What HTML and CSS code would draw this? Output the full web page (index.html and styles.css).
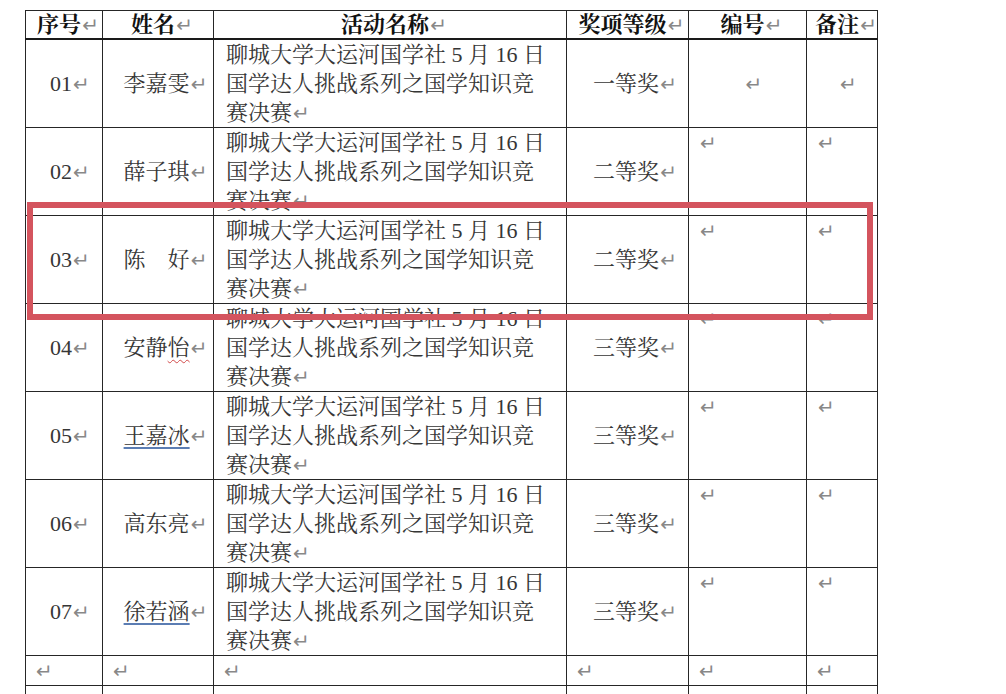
FILE: index.html
```html
<!DOCTYPE html>
<html lang="zh-CN">
<head>
<meta charset="utf-8">
<title>获奖名单</title>
<link rel="stylesheet" href="styles.css">
</head>
<body>
<div class="sheet">
  <table class="awards">
    <colgroup>
      <col class="c-no"><col class="c-name"><col class="c-act"><col class="c-level"><col class="c-code"><col class="c-note">
    </colgroup>
    <thead>
      <tr>
        <th>序号<span class="pm">↵</span></th>
        <th>姓名<span class="pm">↵</span></th>
        <th>活动名称<span class="pm">↵</span></th>
        <th>奖项等级<span class="pm">↵</span></th>
        <th>编号<span class="pm">↵</span></th>
        <th>备注<span class="pm">↵</span></th>
      </tr>
    </thead>
    <tbody>
      <tr class="data">
        <td class="mid">01<span class="pm">↵</span></td>
        <td class="mid">李嘉雯<span class="pm">↵</span></td>
        <td class="act">聊城大学大运河国学社 5 月 16 日国学达人挑战系列之国学知识竞赛决赛<span class="pm">↵</span></td>
        <td class="mid">一等奖<span class="pm">↵</span></td>
        <td class="mid"><span class="pm">↵</span></td>
        <td class="mid"><span class="pm">↵</span></td>
      </tr>
      <tr class="data">
        <td class="mid">02<span class="pm">↵</span></td>
        <td class="mid">薛子琪<span class="pm">↵</span></td>
        <td class="act">聊城大学大运河国学社 5 月 16 日国学达人挑战系列之国学知识竞赛决赛<span class="pm">↵</span></td>
        <td class="mid">二等奖<span class="pm">↵</span></td>
        <td class="top"><span class="pm">↵</span></td>
        <td class="top"><span class="pm">↵</span></td>
      </tr>
      <tr class="data">
        <td class="mid">03<span class="pm">↵</span></td>
        <td class="mid">陈　好<span class="pm">↵</span></td>
        <td class="act">聊城大学大运河国学社 5 月 16 日国学达人挑战系列之国学知识竞赛决赛<span class="pm">↵</span></td>
        <td class="mid">二等奖<span class="pm">↵</span></td>
        <td class="top"><span class="pm">↵</span></td>
        <td class="top"><span class="pm">↵</span></td>
      </tr>
      <tr class="data">
        <td class="mid">04<span class="pm">↵</span></td>
        <td class="mid">安静<span class="wavy">怡</span><span class="pm">↵</span></td>
        <td class="act">聊城大学大运河国学社 5 月 16 日国学达人挑战系列之国学知识竞赛决赛<span class="pm">↵</span></td>
        <td class="mid">三等奖<span class="pm">↵</span></td>
        <td class="top"><span class="pm">↵</span></td>
        <td class="top"><span class="pm">↵</span></td>
      </tr>
      <tr class="data">
        <td class="mid">05<span class="pm">↵</span></td>
        <td class="mid"><span class="ul">王嘉冰</span><span class="pm">↵</span></td>
        <td class="act">聊城大学大运河国学社 5 月 16 日国学达人挑战系列之国学知识竞赛决赛<span class="pm">↵</span></td>
        <td class="mid">三等奖<span class="pm">↵</span></td>
        <td class="top"><span class="pm">↵</span></td>
        <td class="top"><span class="pm">↵</span></td>
      </tr>
      <tr class="data">
        <td class="mid">06<span class="pm">↵</span></td>
        <td class="mid">高东亮<span class="pm">↵</span></td>
        <td class="act">聊城大学大运河国学社 5 月 16 日国学达人挑战系列之国学知识竞赛决赛<span class="pm">↵</span></td>
        <td class="mid">三等奖<span class="pm">↵</span></td>
        <td class="top"><span class="pm">↵</span></td>
        <td class="top"><span class="pm">↵</span></td>
      </tr>
      <tr class="data">
        <td class="mid">07<span class="pm">↵</span></td>
        <td class="mid"><span class="ul">徐若涵</span><span class="pm">↵</span></td>
        <td class="act">聊城大学大运河国学社 5 月 16 日国学达人挑战系列之国学知识竞赛决赛<span class="pm">↵</span></td>
        <td class="mid">三等奖<span class="pm">↵</span></td>
        <td class="top"><span class="pm">↵</span></td>
        <td class="top"><span class="pm">↵</span></td>
      </tr>
      <tr class="empty">
        <td><span class="pm">↵</span></td>
        <td><span class="pm">↵</span></td>
        <td><span class="pm">↵</span></td>
        <td><span class="pm">↵</span></td>
        <td><span class="pm">↵</span></td>
        <td><span class="pm">↵</span></td>
      </tr>
      <tr class="empty">
        <td><span class="pm">↵</span></td>
        <td><span class="pm">↵</span></td>
        <td><span class="pm">↵</span></td>
        <td><span class="pm">↵</span></td>
        <td><span class="pm">↵</span></td>
        <td><span class="pm">↵</span></td>
      </tr>
    </tbody>
  </table>
  <div class="highlight"></div>
</div>
</body>
</html>
```

FILE: styles.css
```css
html, body {
  margin: 0;
  padding: 0;
  background: #ffffff;
  overflow: hidden;
}

body {
  font-family: "Liberation Serif", "Noto Serif CJK SC", "Noto Sans CJK SC", serif;
  color: #363636;
}

.sheet {
  position: relative;
  padding: 10px 0 0 25px;
  width: 981px;
  height: 684px;
}

.awards {
  border-collapse: collapse;
  table-layout: fixed;
  width: 852px;
  font-size: 22px;
}

.c-no { width: 77px; }
.c-name { width: 111px; }
.c-act { width: 353px; }
.c-level { width: 122px; }
.c-code { width: 118px; }
.c-note { width: 71px; }

.awards th,
.awards td {
  border: 1px solid #262626;
  padding: 0;
  line-height: 29px;
}

.awards th {
  height: 27px;
  line-height: 27px;
  padding-left: 8px;
  font-weight: bold;
  color: #111;
  text-align: center;
  white-space: nowrap;
  border-bottom: 2px solid #1a1a1a;
}

.data td {
  height: 87px;
}

.mid {
  text-align: center;
  vertical-align: middle;
  white-space: nowrap;
  padding-left: 12px !important;
}

.data .mid:nth-child(2),
.data .mid:nth-child(4) {
  padding-left: 15px !important;
}

.top {
  vertical-align: top;
  text-align: left;
  padding-left: 10px !important;
}

.act {
  vertical-align: top;
  text-align: left;
  padding: 0 11px 0 12px !important;
}

.empty td {
  height: 28px;
  vertical-align: middle;
  padding-left: 9px !important;
}

.pm {
  font-family: "DejaVu Sans", sans-serif;
  font-size: 20px;
  line-height: 1px;
  font-weight: normal;
  color: #888888;
  margin-left: 1px;
}

.wavy {
  text-decoration: underline wavy #d24a4a;
  text-decoration-thickness: 1px;
  text-underline-offset: 4px;
}

.ul {
  text-decoration: underline;
  text-decoration-color: #5b7db3;
  text-decoration-thickness: 1.5px;
  text-underline-offset: 4px;
}

.highlight {
  position: absolute;
  left: 27px;
  top: 202px;
  width: 834px;
  height: 106px;
  border: 6px solid #d4545e;
  pointer-events: none;
}
```
